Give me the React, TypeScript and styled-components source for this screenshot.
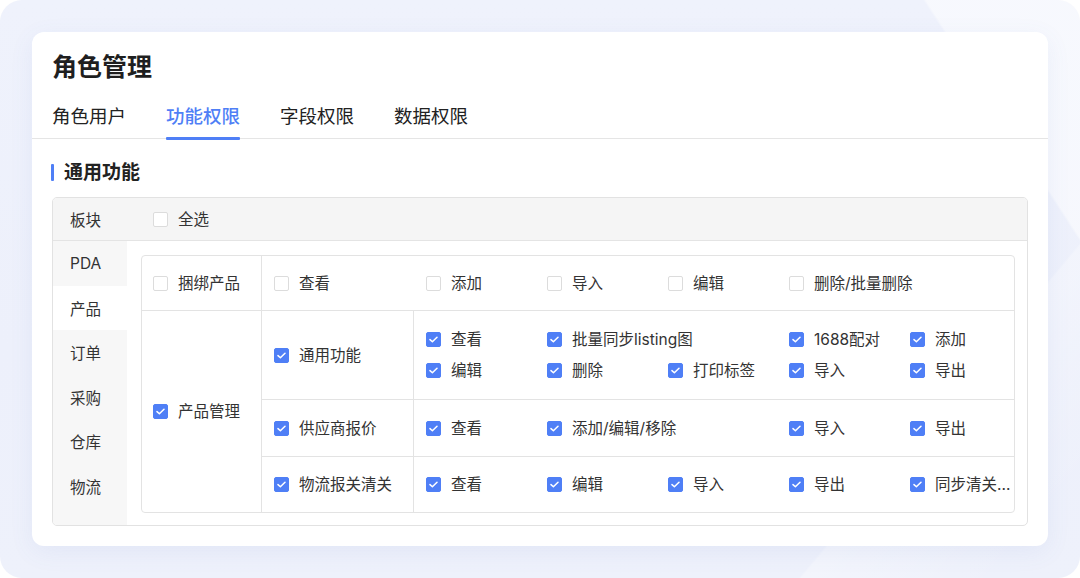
import styled, { createGlobalStyle } from 'styled-components';

const GlobalStyle = createGlobalStyle`
  html, body {
    margin: 0;
    padding: 0;
    background: #ffffff;
  }
  * {
    box-sizing: border-box;
  }
  body {
    font-family: Inter, "Noto Sans CJK SC", "Noto Sans", sans-serif;
    color: #333333;
  }
`;

interface Opt {
  label: string
  span?: number
}

interface SubRow {
  name: string
  checked: boolean
  options: Opt[]
}

const tabs = ['角色用户', '功能权限', '字段权限', '数据权限'];
const modules = ['PDA', '产品', '订单', '采购', '仓库', '物流'];

const bundleOptions: Opt[] = [
  { label: '添加' },
  { label: '导入' },
  { label: '编辑' },
  { label: '删除/批量删除', span: 2 },
];

const subRows: SubRow[] = [
  {
    name: '通用功能',
    checked: true,
    options: [
      { label: '查看' },
      { label: '批量同步listing图', span: 2 },
      { label: '1688配对' },
      { label: '添加' },
      { label: '编辑' },
      { label: '删除' },
      { label: '打印标签' },
      { label: '导入' },
      { label: '导出' },
    ],
  },
  {
    name: '供应商报价',
    checked: true,
    options: [
      { label: '查看' },
      { label: '添加/编辑/移除', span: 2 },
      { label: '导入' },
      { label: '导出' },
    ],
  },
  {
    name: '物流报关清关',
    checked: true,
    options: [
      { label: '查看' },
      { label: '编辑' },
      { label: '导入' },
      { label: '导出' },
      { label: '同步清关...' },
    ],
  },
];

const Check: React.FC<{ checked?: boolean, label: string, span?: number }> = ({ checked, label, span }) =>
  <Item $span={span}>
    <Box $checked={checked}>
      {checked &&
        <svg width="9" height="7" viewBox="0 0 9 7" fill="none">
          <path d="M1 3.6 L3.4 5.8 L8 1.2" stroke="#ffffff" strokeWidth="1.5" strokeLinecap="round" strokeLinejoin="round" />
        </svg>}
    </Box>
    <Label>{label}</Label>
  </Item>;

const App: React.FC = () =>
  <>
    <GlobalStyle />
    <Page>
      <Tile>
        <Card>
          <Title>角色管理</Title>
          <TabBar>
            {tabs.map((t, i) => <Tab key={t} $active={i === 1}>{t}</Tab>)}
          </TabBar>
          <Body>
            <SectionTitle>通用功能</SectionTitle>
            <Panel>
              <PanelHead>
                <HeadName>板块</HeadName>
                <Check label="全选" />
              </PanelHead>
              <PanelBody>
                <Sidebar>
                  {modules.map(m => <SideItem key={m} $active={m === '产品'}>{m}</SideItem>)}
                </Sidebar>
                <Content>
                  <Grid>
                    <Cell $row="1" $col="1">
                      <Check label="捆绑产品" />
                    </Cell>
                    <Cell $row="1" $col="2 / 4" $flat>
                      <SubSlot>
                        <Check label="查看" />
                      </SubSlot>
                      <Options>
                        {bundleOptions.map(o => <Check key={o.label} label={o.label} span={o.span} />)}
                      </Options>
                    </Cell>
                    <Cell $row="2 / 5" $col="1" $last>
                      <Check checked label="产品管理" />
                    </Cell>
                    {subRows.map((r, i) =>
                      <Row key={r.name} $row={i + 2} $last={i === subRows.length - 1}>
                        <SubCell>
                          <Check checked={r.checked} label={r.name} />
                        </SubCell>
                        <OptCell>
                          <Options>
                            {r.options.map((o, j) => <Check key={j} checked label={o.label} span={o.span} />)}
                          </Options>
                        </OptCell>
                      </Row>
                    )}
                  </Grid>
                </Content>
              </PanelBody>
            </Panel>
          </Body>
        </Card>
      </Tile>
    </Page>
  </>;

const Page = styled.div`
  width: 1080px;
  height: 578px;
  background: #ffffff;
`;

const Tile = styled.div`
  width: 100%;
  height: 100%;
  padding: 32px;
  border-radius: 22px;
  background:
    linear-gradient(57deg, rgba(255, 255, 255, 0) 89.2%, rgba(255, 255, 255, 0.5) 89.4%),
    linear-gradient(130deg, rgba(255, 255, 255, 0) 82%, rgba(255, 255, 255, 0.3) 82.2%, rgba(255, 255, 255, 0) 95%),
    linear-gradient(180deg, #eff2fc 0%, #edf0fb 60%, #eef1fb 100%);
`;

const Card = styled.div`
  height: 514px;
  background: #ffffff;
  border-radius: 12px;
  box-shadow: 0 6px 24px rgba(90, 110, 190, 0.08);
  display: flex;
  flex-direction: column;
`;

const Title = styled.h1`
  margin: 20px 0 0 20px;
  font-size: 25px;
  line-height: 30px;
  font-weight: 700;
  color: #1f1f1f;
`;

const TabBar = styled.div`
  display: flex;
  gap: 40px;
  padding: 0 20px;
  border-bottom: 1px solid #e5e5e5;
`;

const Tab = styled.div<{ $active?: boolean }>`
  position: relative;
  padding: 21px 0 9px;
  font-size: 18.5px;
  line-height: 26px;
  color: ${p => p.$active ? '#4f7ff6' : '#222222'};
  font-weight: ${p => p.$active ? 500 : 400};

  &::after {
    content: '';
    display: ${p => p.$active ? 'block' : 'none'};
    position: absolute;
    left: 0;
    right: 0;
    bottom: -2px;
    height: 3px;
    border-radius: 1px;
    background: #4f7ff6;
  }
`;

const Body = styled.div`
  padding: 0 20px 20px;
  flex: 1;
  display: flex;
  flex-direction: column;
`;

const SectionTitle = styled.h2`
  position: relative;
  margin: 22px 0 12px;
  padding-left: 12px;
  font-size: 19px;
  line-height: 24px;
  font-weight: 700;
  color: #222222;

  &::before {
    content: '';
    position: absolute;
    left: -1px;
    top: 3px;
    width: 3px;
    height: 17px;
    border-radius: 1px;
    background: #4f7ff6;
  }
`;

const Panel = styled.div`
  flex: 1;
  border: 1px solid #e2e2e2;
  border-radius: 5px;
  overflow: hidden;
  display: flex;
  flex-direction: column;
`;

const PanelHead = styled.div`
  height: 43px;
  background: #f5f5f5;
  border-bottom: 1px solid #e4e4e4;
  display: flex;
  align-items: center;
`;

const HeadName = styled.div`
  width: 100px;
  padding-left: 17px;
  font-size: 15.5px;
  color: #333333;
`;

const PanelBody = styled.div`
  flex: 1;
  display: flex;
`;

const Sidebar = styled.div`
  width: 74px;
  background: #f7f7f7;
  display: flex;
  flex-direction: column;
`;

const SideItem = styled.div<{ $active?: boolean }>`
  height: 44.5px;
  display: flex;
  align-items: center;
  padding-left: 17px;
  font-size: 15.5px;
  color: #333333;
  background: ${p => p.$active ? '#ffffff' : 'transparent'};
`;

const Content = styled.div`
  flex: 1;
  padding: 14px 12px 12px 14px;
`;

const Grid = styled.div`
  display: grid;
  grid-template-columns: 120px 152px 1fr;
  grid-template-rows: 55px 89px 57px 55px;
  border: 1px solid #e3e3e3;
  border-radius: 4px;
  overflow: hidden;
`;

const Cell = styled.div<{ $row: string, $col: string, $flat?: boolean, $last?: boolean }>`
  grid-row: ${p => p.$row};
  grid-column: ${p => p.$col};
  display: flex;
  align-items: center;
  padding-left: ${p => p.$flat ? 0 : 11}px;
  border-right: ${p => p.$flat ? 'none' : '1px solid #e3e3e3'};
  border-bottom: ${p => p.$last ? 'none' : '1px solid #e3e3e3'};
`;

const Row = styled.div<{ $row: number, $last?: boolean }>`
  grid-row: ${p => p.$row};
  grid-column: 2 / 4;
  display: grid;
  grid-template-columns: 152px 1fr;
  border-bottom: ${p => p.$last ? 'none' : '1px solid #e3e3e3'};
`;

const SubCell = styled.div`
  display: flex;
  align-items: center;
  padding-left: 12px;
  border-right: 1px solid #e3e3e3;
`;

const SubSlot = styled.div`
  width: 152px;
  padding-left: 12px;
  display: flex;
  align-items: center;
`;

const OptCell = styled.div`
  display: flex;
  align-items: center;
  min-width: 0;
`;

const Options = styled.div`
  flex: 1;
  min-width: 0;
  display: grid;
  grid-template-columns: repeat(4, 121px) minmax(0, 1fr);
  row-gap: 10px;
  padding: 0 4px 0 12px;
`;

const Item = styled.label<{ $span?: number }>`
  grid-column: span ${p => p.$span || 1};
  display: flex;
  align-items: center;
  gap: 10px;
  min-width: 0;
  height: 21px;
`;

const Box = styled.span<{ $checked?: boolean }>`
  flex: none;
  width: 15px;
  height: 15px;
  border-radius: 2px;
  border: 1px solid ${p => p.$checked ? '#4f7ff6' : '#dcdcdc'};
  background: ${p => p.$checked ? '#4f7ff6' : '#ffffff'};
  display: flex;
  align-items: center;
  justify-content: center;
`;

const Label = styled.span`
  font-size: 15.5px;
  line-height: 21px;
  color: #333333;
  white-space: nowrap;
`;

export default App;
